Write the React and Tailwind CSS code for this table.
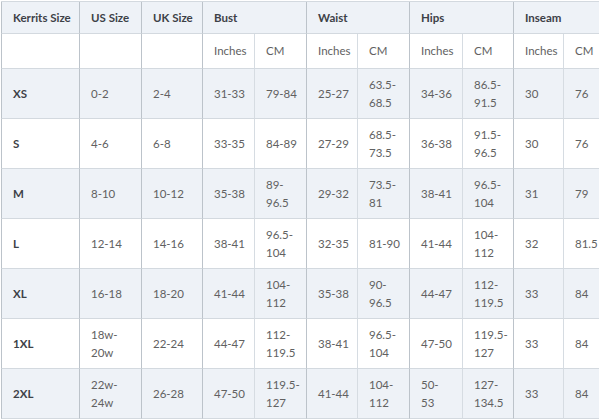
import React from 'react';

const cols = 'grid-cols-[78px_62px_61px_52px_52px_51px_52px_53px_51px_50px_50px]';

const rows = [
  ['XS', '0-2', '2-4', '31-33', '79-84', '25-27', '63.5-|68.5', '34-36', '86.5-|91.5', '30', '76'],
  ['S', '4-6', '6-8', '33-35', '84-89', '27-29', '68.5-|73.5', '36-38', '91.5-|96.5', '30', '76'],
  ['M', '8-10', '10-12', '35-38', '89-|96.5', '29-32', '73.5-|81', '38-41', '96.5-|104', '31', '79'],
  ['L', '12-14', '14-16', '38-41', '96.5-|104', '32-35', '81-90', '41-44', '104-|112', '32', '81.5'],
  ['XL', '16-18', '18-20', '41-44', '104-|112', '35-38', '90-|96.5', '44-47', '112-|119.5', '33', '84'],
  ['1XL', '18w-|20w', '22-24', '44-47', '112-|119.5', '38-41', '96.5-|104', '47-50', '119.5-|127', '33', '84'],
  ['2XL', '22w-|24w', '26-28', '47-50', '119.5-|127', '41-44', '104-|112', '50-|53', '127-|134.5', '33', '84'],
];

// group borders are a bit darker than the inner inches/cm lines
const groupCol = [0, 1, 2, 3, 5, 7, 9];

const Cell = ({ children, idx, shaded, className = '' }) => (
  <div
    className={
      'flex items-center pl-[11px] pr-1 border-b border-b-[#d3d9df] border-l ' +
      (groupCol.includes(idx) ? 'border-l-[#bcc3ca] ' : 'border-l-[#d6dce2] ') +
      (shaded ? 'bg-[#eef2f7] ' : 'bg-white ') +
      className
    }
  >
    {children}
  </div>
);

const App = () => {
  return (
    <div
      className="w-[599px] h-[419px] overflow-hidden bg-white pt-[1px] pl-[1px]"
      style={{ fontFamily: 'Lato, "Open Sans", sans-serif' }}
    >
      <div className={`grid ${cols} w-max border-t border-[#d3d9df] text-[11.5px] leading-[18px] text-[#616161]`}>

        {/* header row */}
        {['Kerrits Size', 'US Size', 'UK Size'].map((h, i) => (
          <Cell key={h} idx={i} shaded className="h-[32px] font-bold text-[#3d4147]">{h}</Cell>
        ))}
        <Cell idx={3} shaded className="col-span-2 h-[32px] font-bold text-[#3d4147]">Bust</Cell>
        <Cell idx={5} shaded className="col-span-2 h-[32px] font-bold text-[#3d4147]">Waist</Cell>
        <Cell idx={7} shaded className="col-span-2 h-[32px] font-bold text-[#3d4147]">Hips</Cell>
        <Cell idx={9} shaded className="col-span-2 h-[32px] font-bold text-[#3d4147]">Inseam</Cell>

        {/* units row */}
        {Array(11).fill(0).map((_, i) => (
          <Cell key={'u' + i} idx={i} className="h-[35px]">
            {i < 3 ? '' : i % 2 === 1 ? 'Inches' : 'CM'}
          </Cell>
        ))}

        {/* data */}
        {rows.map((row, r) =>
          row.map((val, i) => (
            <Cell
              key={r + '-' + i}
              idx={i}
              shaded={r % 2 === 0}
              className={'h-[50px] ' + (i === 0 ? 'font-bold text-[#3d4147]' : '')}
            >
              <span>
                {val.split('|').map((line, k) => (
                  <React.Fragment key={k}>
                    {k > 0 && <br />}
                    {line}
                  </React.Fragment>
                ))}
              </span>
            </Cell>
          ))
        )}

      </div>
    </div>
  );
};

export default App;
